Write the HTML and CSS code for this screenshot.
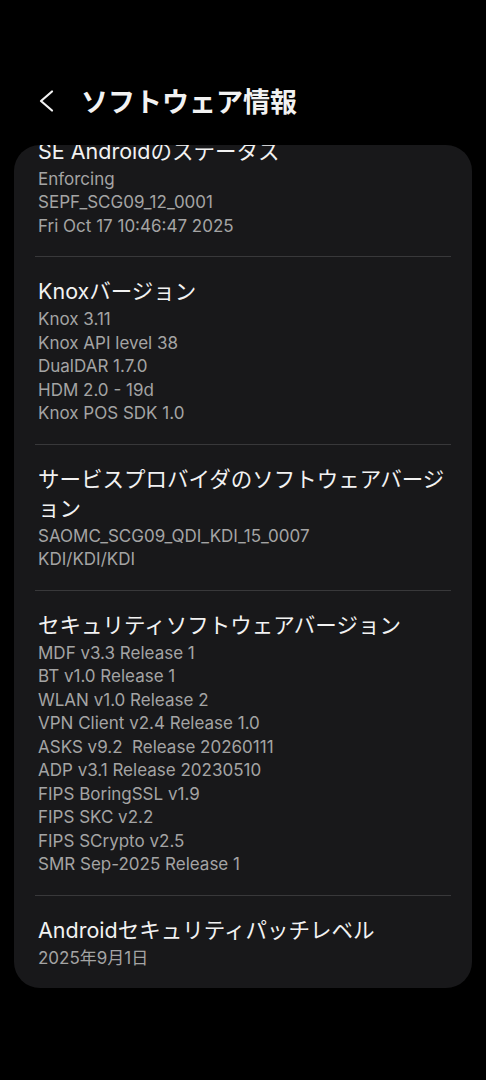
FILE: index.html
```html
<!DOCTYPE html>
<html lang="ja">
<head>
    <meta charset="UTF-8">
    <meta name="viewport" content="width=device-width, initial-scale=1.0">
    <title>ソフトウェア情報</title>
    <link rel="stylesheet" href="styles.css">
</head>
<body>
    <!-- Top bar with back button and page title -->
    <header class="app-bar">
        <button class="back-button" aria-label="戻る">
            <svg width="18" height="24" viewBox="0 0 18 24">
                <polyline points="14,2.5 3,12 14,21.5" fill="none" stroke="#f2f2f2" stroke-width="2.2" stroke-linecap="round" stroke-linejoin="round"/>
            </svg>
        </button>
        <h1 class="page-title">ソフトウェア情報</h1>
    </header>

    <!-- Scrolled list of software info items -->
    <main class="info-card">
        <div class="info-list">
            <section class="info-item">
                <div class="info-title">SE Androidのステータス</div>
                <div class="info-value">Enforcing</div>
                <div class="info-value">SEPF_SCG09_12_0001</div>
                <div class="info-value">Fri Oct 17 10:46:47 2025</div>
            </section>
            <section class="info-item">
                <div class="info-title">Knoxバージョン</div>
                <div class="info-value">Knox 3.11</div>
                <div class="info-value">Knox API level 38</div>
                <div class="info-value">DualDAR 1.7.0</div>
                <div class="info-value">HDM 2.0 - 19d</div>
                <div class="info-value">Knox POS SDK 1.0</div>
            </section>
            <section class="info-item">
                <div class="info-title">サービスプロバイダのソフトウェアバージョン</div>
                <div class="info-value">SAOMC_SCG09_QDI_KDI_15_0007</div>
                <div class="info-value">KDI/KDI/KDI</div>
            </section>
            <section class="info-item">
                <div class="info-title">セキュリティソフトウェアバージョン</div>
                <div class="info-value">MDF v3.3 Release 1</div>
                <div class="info-value">BT v1.0 Release 1</div>
                <div class="info-value">WLAN v1.0 Release 2</div>
                <div class="info-value">VPN Client v2.4 Release 1.0</div>
                <div class="info-value">ASKS v9.2&nbsp; Release 20260111</div>
                <div class="info-value">ADP v3.1 Release 20230510</div>
                <div class="info-value">FIPS BoringSSL v1.9</div>
                <div class="info-value">FIPS SKC v2.2</div>
                <div class="info-value">FIPS SCrypto v2.5</div>
                <div class="info-value">SMR Sep-2025 Release 1</div>
            </section>
            <section class="info-item">
                <div class="info-title">Androidセキュリティパッチレベル</div>
                <div class="info-value">2025年9月1日</div>
            </section>
        </div>
    </main>
</body>
</html>
```

FILE: styles.css
```css
/* Page base: black One UI style background */
body {
    margin: 0;
    padding: 0;
    background: #000;
    font-family: Inter, "Noto Sans CJK JP", sans-serif;
    color: #f2f2f2;
}

/* App bar with back chevron and title */
.app-bar {
    height: 145px;
    display: flex;
    align-items: flex-start;
    padding: 85px 0 0 32px;
    box-sizing: border-box;
}

.back-button {
    background: none;
    border: none;
    padding: 0;
    margin: 4px 0 0 6px;
    width: 18px;
    height: 24px;
    display: flex;
}

.page-title {
    margin: 0 0 0 25px;
    font-family: "Noto Sans CJK JP", sans-serif;
    font-size: 27px;
    font-weight: 700;
    line-height: 32px;
    letter-spacing: 0;
}

/* Rounded card that clips the scrolled content */
.info-card {
    margin: 0 14px;
    background: #18181a;
    border-radius: 26px;
    overflow: hidden;
}

/* The list is scrolled up a little, so the first title is cut */
.info-list {
    margin-top: -28.5px;
}

.info-item {
    padding: 20px 24px 18px;
}

/* Divider between items, inset from the card edges */
.info-item + .info-item {
    border-top: 1px solid #38383a;
    margin: 0 21px;
    padding: 20px 3px 18px;
}

.info-title {
    font-size: 21.5px;
    line-height: 29px;
    color: #f2f2f2;
    margin-bottom: 2px;
}

.info-value {
    font-size: 17px;
    line-height: 23.5px;
    color: #a4a4a4;
}
```
